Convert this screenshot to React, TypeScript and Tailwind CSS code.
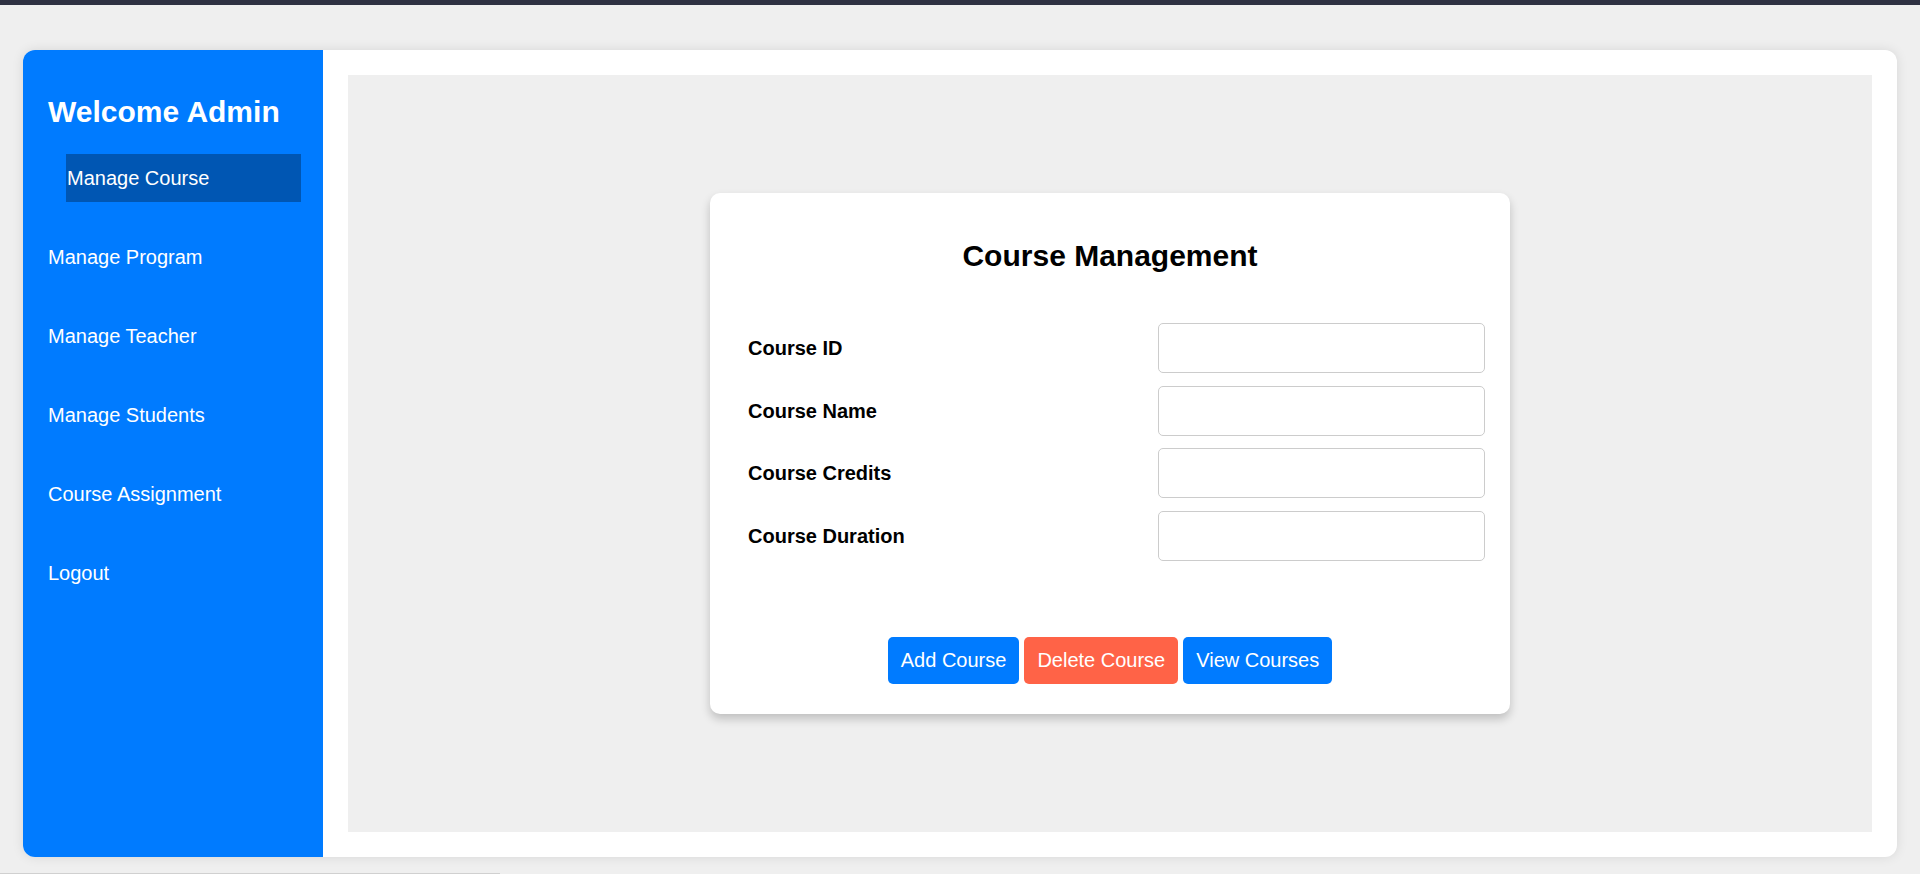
import { useState } from "react";

const menu = [
  "Manage Course",
  "Manage Program",
  "Manage Teacher",
  "Manage Students",
  "Course Assignment",
  "Logout",
];

const fields = ["Course ID", "Course Name", "Course Credits", "Course Duration"];

export default function App() {
  const [active] = useState("Manage Course");
  const [values, setValues] = useState<Record<string, string>>({});

  return (
    <div className="flex h-[874px] flex-col bg-[#efefef] font-['Liberation_Sans',Arial,sans-serif]">
      <div className="h-[5px] bg-[#2f3142]" />

      <div className="mx-[23px] mt-[45px] flex h-[807px] overflow-hidden rounded-[12px] bg-white shadow-[0_0_12px_rgba(0,0,0,0.1)]">
        {/* sidebar */}
        <aside className="w-[300px] shrink-0 bg-[#007bff] px-[25px] pt-[45px] text-white">
          <h2 className="text-[30px] font-bold leading-[34px]">Welcome Admin</h2>
          <ul className="mt-[25px] flex flex-col gap-[31px]">
            {menu.map((item) =>
              item === active ? (
                <li
                  key={item}
                  className="ml-[18px] flex h-[48px] w-[235px] items-center bg-[#0056b3] pl-[1px] text-[20px]"
                >
                  {item}
                </li>
              ) : (
                <li key={item} className="flex h-[48px] items-center text-[20px]">
                  {item}
                </li>
              )
            )}
          </ul>
        </aside>

        {/* main */}
        <main className="flex flex-1 p-[25px]">
          <div className="flex flex-1 items-center justify-center bg-[#efefef]">
            <div className="flex w-[800px] flex-col rounded-[10px] bg-white px-[25px] pt-[46px] pb-[30px] shadow-[0_5px_10px_rgba(0,0,0,0.2)]">
              <h2 className="text-center text-[30px] font-bold leading-[34px] text-black">
                Course Management
              </h2>

              <div className="mt-[50px] flex flex-col gap-[12.5px]">
                {fields.map((f) => (
                  <div key={f} className="flex h-[50px] items-center justify-between">
                    <label className="pl-[13px] text-[20px] font-bold text-black">{f}</label>
                    <input
                      value={values[f] ?? ""}
                      onChange={(e) => setValues({ ...values, [f]: e.target.value })}
                      className="h-[50px] w-[327px] rounded-[5px] border border-[#cccccc] bg-white px-3 text-[20px] outline-none"
                    />
                  </div>
                ))}
              </div>

              <div className="mt-[76px] flex justify-center gap-[5px]">
                <button className="h-[47px] rounded-[5px] bg-[#007bff] px-[13px] text-[20px] text-white">
                  Add Course
                </button>
                <button className="h-[47px] rounded-[5px] bg-[#ff6347] px-[13px] text-[20px] text-white">
                  Delete Course
                </button>
                <button className="h-[47px] rounded-[5px] bg-[#007bff] px-[13px] text-[20px] text-white">
                  View Courses
                </button>
              </div>
            </div>
          </div>
        </main>
      </div>

      <div className="flex-1" />
      <div className="h-px w-[500px] bg-[#d0d0d0]" />
    </div>
  );
}
